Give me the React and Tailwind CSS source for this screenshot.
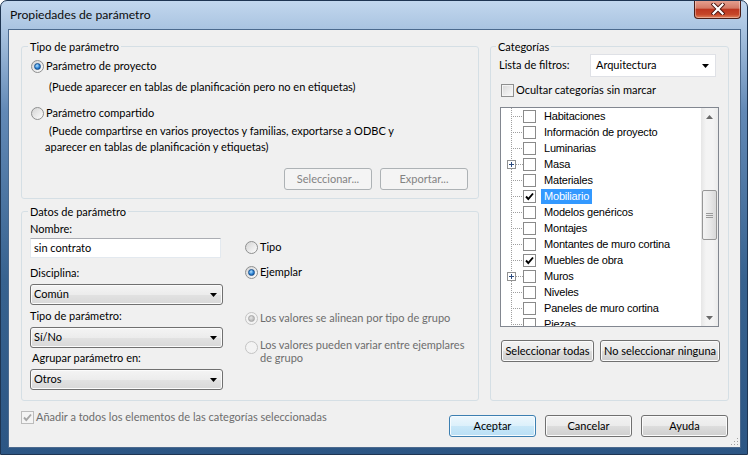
import clsx from 'clsx'

const cats = [
  { name: 'Habitaciones' },
  { name: 'Información de proyecto' },
  { name: 'Luminarias' },
  { name: 'Masa', plus: true },
  { name: 'Materiales' },
  { name: 'Mobiliario', checked: true, selected: true },
  { name: 'Modelos genéricos' },
  { name: 'Montajes' },
  { name: 'Montantes de muro cortina' },
  { name: 'Muebles de obra', checked: true },
  { name: 'Muros', plus: true },
  { name: 'Niveles' },
  { name: 'Paneles de muro cortina' },
  { name: 'Piezas' },
]

const Arrow = ({ color = '#000' }) => (
  <svg width="7" height="4" viewBox="0 0 7 4"><polygon points="0,0 7,0 3.5,4" fill={color} /></svg>
)

const Tick = ({ color = '#000' }) => (
  <svg width="11" height="11" viewBox="0 0 11 11">
    <path d="M2 5.5 L4.3 8 L9 2.5" fill="none" stroke={color} strokeWidth="1.9" />
  </svg>
)

const Radio = ({ checked, disabled }) => (
  <span className={clsx(
    'flex w-[13px] h-[13px] shrink-0 items-center justify-center rounded-full border',
    disabled ? 'border-[#c4c4c4] bg-[#f3f3f3]' : 'border-[#8e8f8f] bg-[linear-gradient(135deg,#d4d4d4,#fdfdfd)]'
  )}>
    {checked && (
      <span className={clsx(
        'w-[7px] h-[7px] rounded-full border',
        disabled
          ? 'border-[#a8a8a8] bg-[radial-gradient(circle_at_40%_35%,#e6e6e6,#a3a3a3)]'
          : 'border-[#18508e] bg-[radial-gradient(circle_at_40%_35%,#b4e2ff,#2b83d6_55%,#0c3f80)]'
      )} />
    )}
  </span>
)

const Btn = ({ children, className, disabled, primary }) => (
  <div className={clsx(
    'flex h-[22px] items-center justify-center whitespace-nowrap rounded-[3px] border',
    disabled && 'border-[#adb2b5] bg-[#f4f4f4] text-[#838383]',
    primary && 'border-[#3c7fb1] bg-[linear-gradient(to_bottom,#edf7fd,#dcf0fb_50%,#c8e7f8_51%,#b9dff5)] shadow-[inset_0_0_0_1px_#f6fbfe]',
    !disabled && !primary && 'border-[#707070] bg-[linear-gradient(to_bottom,#f2f2f2,#ebebeb_50%,#dddddd_51%,#cfcfcf)] shadow-[inset_0_0_0_1px_#fbfbfb]',
    className
  )}>
    {children}
  </div>
)

const Combo = ({ value, className }) => (
  <div className={clsx(
    'flex h-[21px] items-center justify-between rounded-[3px] border border-[#707070] bg-[linear-gradient(to_bottom,#f4f4f4,#ececec_50%,#e2e2e2_51%,#d8d8d8)] pl-[3px] pr-[5px] shadow-[inset_0_0_0_1px_#fbfbfb]',
    className
  )}>
    <span>{value}</span>
    <Arrow />
  </div>
)

const TreeGutter = ({ plus }) => (
  <svg width="22" height="16" viewBox="0 0 22 16" className="shrink-0">
    {plus ? (
      <>
        <line x1="10.5" y1="0" x2="10.5" y2="4" stroke="#a0a0a0" strokeDasharray="1 1" />
        <line x1="10.5" y1="13" x2="10.5" y2="16" stroke="#a0a0a0" strokeDasharray="1 1" />
        <line x1="15" y1="8.5" x2="22" y2="8.5" stroke="#a0a0a0" strokeDasharray="1 1" />
        <rect x="6.5" y="4.5" width="8" height="8" fill="#fff" stroke="#919191" />
        <line x1="8" y1="8.5" x2="13" y2="8.5" stroke="#2b4a7e" />
        <line x1="10.5" y1="6" x2="10.5" y2="11" stroke="#2b4a7e" />
      </>
    ) : (
      <>
        <line x1="10.5" y1="0" x2="10.5" y2="16" stroke="#a0a0a0" strokeDasharray="1 1" />
        <line x1="12" y1="8.5" x2="22" y2="8.5" stroke="#a0a0a0" strokeDasharray="1 1" />
      </>
    )}
  </svg>
)

export default function App() {
  return (
    <div className="w-[748px] h-[455px] flex flex-col overflow-hidden rounded-t-[7px] border border-[#1e3552] bg-[linear-gradient(to_bottom,#c2d7ee_0px,#aac4e1_28px,#6289b6_110px,#37628f_280px,#2c5684_455px)] font-['Lato','Liberation_Sans',sans-serif] text-[11px] text-black">
      {/* barra de título */}
      <div className="flex h-[28px] shrink-0 items-start justify-between pl-[9px] pr-[6px]">
        <span className="self-center text-[12.2px] leading-[18px] text-[#0c0c0c]">Propiedades de parámetro</span>
        <div className="flex h-[19px] w-[47px] -mt-[1px] items-center justify-center rounded-b-[4px] border border-t-0 border-[#4b1d16] bg-[linear-gradient(to_bottom,#e7a494,#d47a66_45%,#bd3620_52%,#c64628_80%,#e0825c)] shadow-[inset_0_0_0_1px_rgba(255,255,255,0.35)]">
          <svg width="14" height="12" viewBox="0 0 14 12">
            <path d="M2.5 1.5 L11.5 10.5 M11.5 1.5 L2.5 10.5" stroke="#4a1510" strokeWidth="4" strokeLinecap="square" />
            <path d="M2.5 1.5 L11.5 10.5 M11.5 1.5 L2.5 10.5" stroke="#fff" strokeWidth="2.2" strokeLinecap="square" />
          </svg>
        </div>
      </div>

      {/* área cliente */}
      <div className="relative ml-[7px] mr-[6px] mb-[6px] flex flex-1 flex-col border border-[#4c6a8e] bg-[#f0f0f0] pl-[12px] pr-[11px] pt-[9px]">
        <div className="flex gap-[11px]">
          <div className="flex w-[458px] flex-col">
            <fieldset className="h-[160px] rounded-[3px] border border-[#d5dfe5] pl-[9px] pr-[10px]">
              <legend className="-ml-[3px] px-[2px] leading-[15px]">Tipo de parámetro</legend>
              <div className="mt-[4px] flex h-[16px] items-center">
                <Radio checked />
                <span className="ml-[2px]">Parámetro de proyecto</span>
              </div>
              <p className="mt-[5px] pl-[18px] leading-[16px]">(Puede aparecer en tablas de planificación pero no en etiquetas)</p>
              <div className="mt-[10px] flex h-[16px] items-center">
                <Radio />
                <span className="ml-[2px]">Parámetro compartido</span>
              </div>
              <p className="mt-[2px] pl-[14px] indent-[4px] leading-[16px]">
                (Puede compartirse en varios proyectos y familias, exportarse a ODBC y<br />aparecer en tablas de planificación y etiquetas)
              </p>
              <div className="mt-[13px] flex justify-end gap-[8px]">
                <Btn disabled className="w-[88px]">Seleccionar...</Btn>
                <Btn disabled className="w-[88px]">Exportar...</Btn>
              </div>
            </fieldset>

            <fieldset className="mt-[5px] h-[197px] rounded-[3px] border border-[#d5dfe5] pl-[8px]">
              <legend className="-ml-[2px] px-[2px] leading-[15px]">Datos de parámetro</legend>
              <div className="flex">
                <div className="flex w-[193px] flex-col">
                  <span className="mt-[2px] leading-[16px]">Nombre:</span>
                  <div className="mt-[1px] flex h-[20px] w-[191px] items-center border border-[#e3e9ef] border-t-[#abadb3] bg-white pl-[3px]">sin contrato</div>
                  <span className="mt-[7px] leading-[16px]">Disciplina:</span>
                  <Combo value="Común" className="mt-[3px]" />
                  <span className="mt-[3px] leading-[16px]">Tipo de parámetro:</span>
                  <Combo value="Sí/No" className="mt-[3px]" />
                  <span className="mt-[2px] pl-[2px] leading-[16px]">Agrupar parámetro en:</span>
                  <Combo value="Otros" className="mt-[3px]" />
                </div>
                <div className="ml-[22px] flex flex-col">
                  <div className="mt-[20px] flex h-[16px] items-center">
                    <Radio />
                    <span className="ml-[2px]">Tipo</span>
                  </div>
                  <div className="mt-[9px] flex h-[16px] items-center">
                    <Radio checked />
                    <span className="ml-[2px]">Ejemplar</span>
                  </div>
                  <div className="mt-[30px] flex h-[16px] items-center whitespace-nowrap text-[#6d6d6d]">
                    <Radio checked disabled />
                    <span className="ml-[2px]">Los valores se alinean por tipo de grupo</span>
                  </div>
                  <div className="mt-[12px] flex items-start whitespace-nowrap text-[#6d6d6d]">
                    <span className="mt-[3px]"><Radio disabled /></span>
                    <span className="ml-[2px] leading-[13px]">Los valores pueden variar entre ejemplares<br />de grupo</span>
                  </div>
                </div>
              </div>
            </fieldset>
          </div>

          <fieldset className="h-[362px] w-[239px] rounded-[3px] border border-[#d5dfe5] pl-[8px]">
            <legend className="-ml-[3px] px-[2px] leading-[15px]">Categorías</legend>
            <div className="flex h-[23px] items-center">
              <span className="w-[91px]">Lista de filtros:</span>
              <div className="flex h-[23px] w-[126px] items-center justify-between border border-[#dfe1e6] bg-white pl-[5px] pr-[6px]">
                <span>Arquitectura</span>
                <Arrow />
              </div>
            </div>
            <div className="mt-[5px] flex h-[16px] items-center pl-[2px]">
              <span className="h-[13px] w-[13px] border border-[#8e8f8f] bg-[linear-gradient(135deg,#d8d8d8,#fbfbfb)] shadow-[inset_0_0_0_1px_#f4f4f4]" />
              <span className="ml-[2px]">Ocultar categorías sin marcar</span>
            </div>
            <div className="mt-[9px] ml-[1px] flex h-[220px] w-[219px] border border-[#828790] bg-white">
              <div className="flex-1 overflow-hidden font-['Liberation_Sans',sans-serif] text-[11px] tracking-[-0.2px]">
                {cats.map((c) => (
                  <div key={c.name} className="flex h-[16px] items-center">
                    <TreeGutter plus={c.plus} />
                    <span className="flex h-[13px] w-[13px] shrink-0 items-center justify-center border border-[#8a8a8a] bg-white">
                      {c.checked && <Tick />}
                    </span>
                    <span className={clsx('ml-[5px] h-[15px] px-[3px] leading-[15px] whitespace-nowrap', c.selected && 'bg-[#3399ff] text-white')}>
                      {c.name}
                    </span>
                  </div>
                ))}
              </div>
              <div className="flex w-[17px] shrink-0 flex-col bg-[linear-gradient(to_right,#e6e6e6,#f4f4f4_30%,#f4f4f4_70%,#ebebeb)]">
                <div className="flex h-[17px] items-center justify-center">
                  <svg width="7" height="4" viewBox="0 0 7 4"><polygon points="0,4 7,4 3.5,0" fill="#6a6a6a" /></svg>
                </div>
                <div className="flex-1">
                  <div className="mx-[1px] mt-[65px] flex h-[50px] items-center justify-center rounded-[2px] border border-[#979797] bg-[linear-gradient(to_right,#f4f4f4,#e9e9e9_50%,#d9d9d9)]">
                    <svg width="7" height="7" viewBox="0 0 7 7">
                      <path d="M0 1.5 H7 M0 3.5 H7 M0 5.5 H7" stroke="#9a9a9a" />
                    </svg>
                  </div>
                </div>
                <div className="flex h-[17px] items-center justify-center">
                  <Arrow color="#6a6a6a" />
                </div>
              </div>
            </div>
            <div className="mt-[13px] ml-[2px] flex gap-[6px]">
              <Btn className="w-[93px]">Seleccionar todas</Btn>
              <Btn className="w-[120px]">No seleccionar ninguna</Btn>
            </div>
          </fieldset>
        </div>

        <div className="mt-[8px] flex items-start">
          <div className="flex h-[16px] items-center text-[#6d6d6d]">
            <span className="flex h-[13px] w-[13px] items-center justify-center border border-[#bcbcbc] bg-[#f4f4f4]">
              <Tick color="#a6a6a6" />
            </span>
            <span className="ml-[2px]">Añadir a todos los elementos de las categorías seleccionadas</span>
          </div>
          <div className="ml-auto mr-[1px] mt-[6px] flex gap-[9px]">
            <Btn primary className="w-[87px]">Aceptar</Btn>
            <Btn className="w-[87px]">Cancelar</Btn>
            <Btn className="w-[87px]">Ayuda</Btn>
          </div>
        </div>

        <svg width="8" height="8" viewBox="0 0 8 8" className="absolute bottom-[1px] right-[1px]">
          <rect x="6" y="0" width="1" height="1" fill="#a0a0a0" />
          <rect x="3" y="3" width="1" height="1" fill="#a0a0a0" />
          <rect x="6" y="3" width="1" height="1" fill="#a0a0a0" />
          <rect x="0" y="6" width="1" height="1" fill="#a0a0a0" />
          <rect x="3" y="6" width="1" height="1" fill="#a0a0a0" />
          <rect x="6" y="6" width="1" height="1" fill="#a0a0a0" />
        </svg>
      </div>
    </div>
  )
}
